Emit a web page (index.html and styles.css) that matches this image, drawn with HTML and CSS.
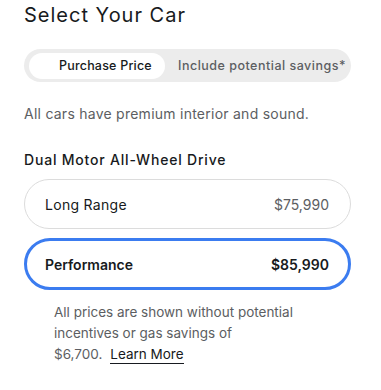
FILE: index.html
```html
<!DOCTYPE html>
<html>
<head>
<meta charset="utf-8">
<link rel="stylesheet" href="styles.css">
</head>
<body>
<div class="page">
  <h1 class="title">Select Your Car</h1>
  <div class="toggle">
    <div class="seg seg-active">Purchase Price</div>
    <div class="seg seg-idle">Include potential savings*</div>
  </div>
  <p class="note">All cars have premium interior and sound.</p>
  <h2 class="group">Dual Motor All-Wheel Drive</h2>
  <div class="options">
    <div class="option">
      <span class="name">Long Range</span>
      <span class="price">$75,990</span>
    </div>
    <div class="option option-selected">
      <span class="name">Performance</span>
      <span class="price">$85,990</span>
    </div>
  </div>
  <p class="disclaimer">All prices are shown without potential incentives or gas savings of <span class="tail">$6,700.<span class="sp"></span><a class="learn" href="#">Learn More</a></span></p>
</div>
</body>
</html>
```

FILE: styles.css
```css
html, body {
  margin: 0;
  padding: 0;
  background: #ffffff;
}
body {
  font-family: Inter, "Noto Sans", "Liberation Sans", sans-serif;
  color: #171a20;
}
.page {
  width: 327px;
  padding-left: 24px;
}
.title {
  margin: 3px 0 0;
  font-size: 20px;
  line-height: 24px;
  font-weight: 400;
  letter-spacing: 1px;
}
.toggle {
  margin-top: 22px;
  height: 33px;
  border-radius: 17px;
  background: #ececec;
  display: flex;
  align-items: center;
  padding: 0 5px;
  box-sizing: border-box;
}
.seg {
  height: 26px;
  display: flex;
  align-items: center;
  font-size: 12.5px;
  font-weight: 500;
  white-space: nowrap;
}
.seg-active {
  width: 136px;
  box-sizing: border-box;
  padding-left: 30px;
  background: #ffffff;
  border-radius: 13px;
  color: #171a20;
  letter-spacing: 0.2px;
}
.seg-idle {
  padding-left: 13px;
  color: #5c5e62;
  letter-spacing: 0.5px;
}
.note {
  margin: 23px 0 0;
  font-size: 14px;
  line-height: 18px;
  color: #5c5e62;
  letter-spacing: 0.25px;
}
.group {
  margin: 28px 0 0;
  font-size: 14px;
  line-height: 18px;
  font-weight: 500;
  letter-spacing: 0.8px;
}
.options {
  margin-top: 10px;
  display: flex;
  flex-direction: column;
  gap: 9px;
}
.option {
  height: 50px;
  box-sizing: border-box;
  border: 1px solid #dcdcdc;
  border-radius: 25px;
  display: flex;
  align-items: center;
  justify-content: space-between;
  padding: 0 21px 0 20px;
  font-size: 14px;
}
.option .name {
  letter-spacing: 0.3px;
}
.option .price {
  color: #5c5e62;
}
.option-selected {
  height: 52px;
  border: 3px solid #3b7cf0;
  border-radius: 26px;
  padding: 0 19px 0 18px;
  font-weight: 600;
}
.option-selected .name {
  letter-spacing: 0;
}
.option-selected .price {
  color: #171a20;
}
.disclaimer {
  margin: 12px 0 0;
  padding-left: 30px;
  width: 250px;
  font-size: 13.5px;
  line-height: 21px;
  color: #5c5e62;
}
.tail {
  white-space: nowrap;
}
.sp {
  display: inline-block;
  width: 8px;
}
.learn {
  color: #171a20;
  text-decoration: none;
  border-bottom: 1px solid #171a20;
  padding-bottom: 1px;
}
```
